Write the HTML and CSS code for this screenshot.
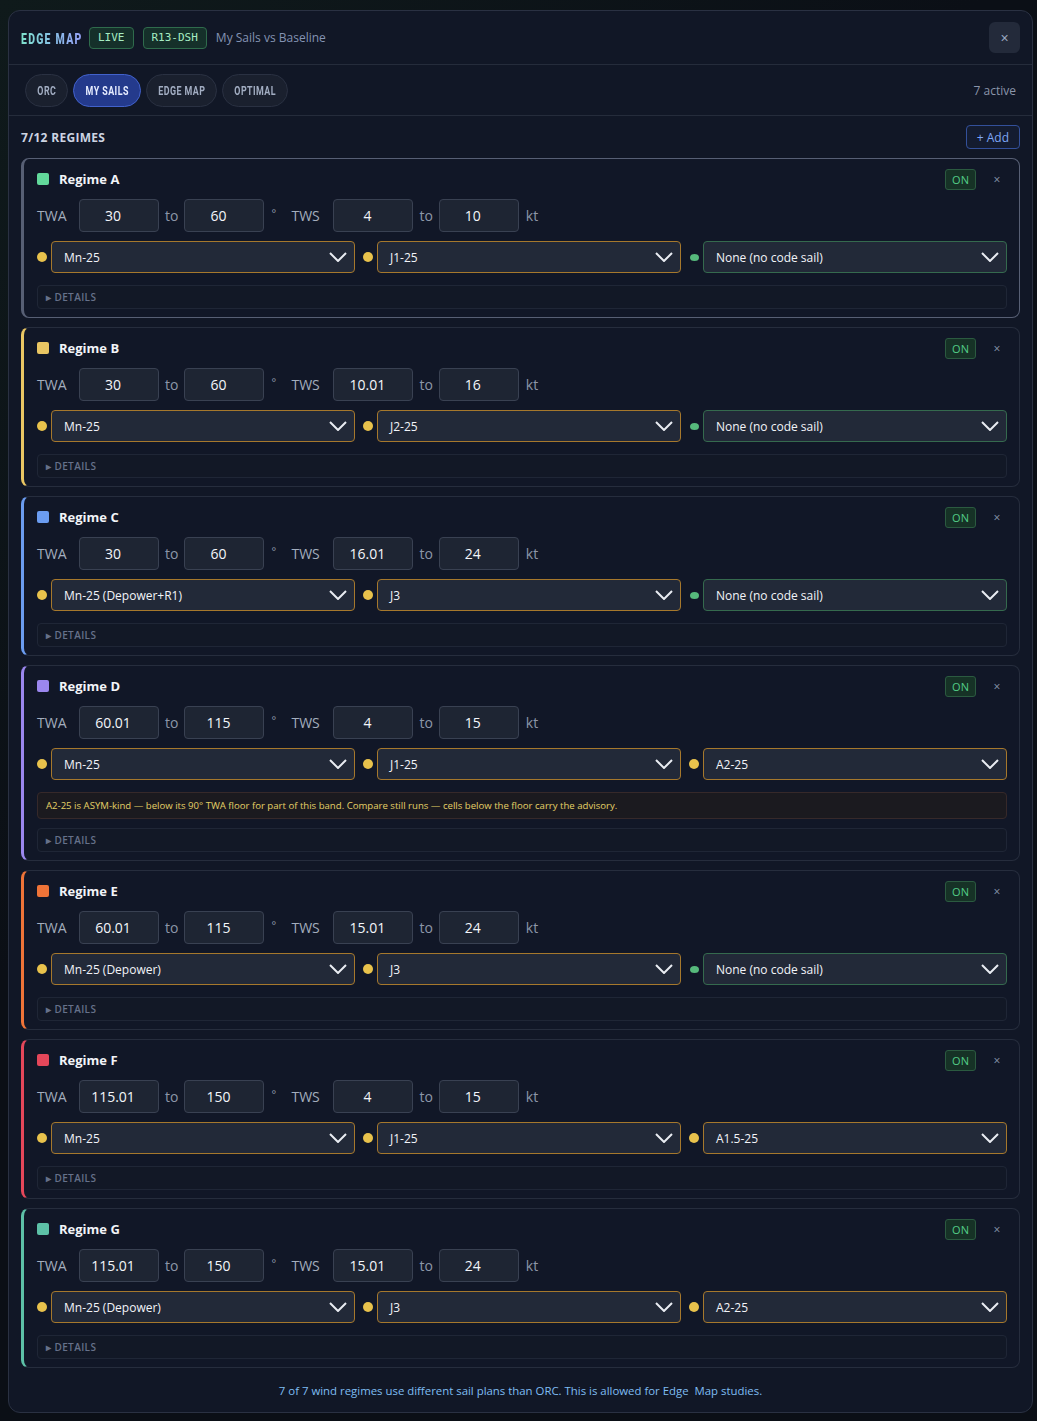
FILE: index.html
```html
<!DOCTYPE html>
<html lang="en">
<head>
    <meta charset="UTF-8">
    <title>Edge Map - My Sails vs Baseline</title>
    <link rel="stylesheet" href="styles.css">
</head>
<body>

<div class="panel">
    <div class="header">
        <span class="logo"><span>EDGE MAP</span></span>
        <span class="badge">LIVE</span>
        <span class="badge">R13-DSH</span>
        <span class="subtitle">My Sails vs Baseline</span>
        <button class="close">&times;</button>
    </div>

    <div class="tabs">
        <button class="tab t-orc"><span>ORC</span></button>
        <button class="tab t-mine active"><span>MY SAILS</span></button>
        <button class="tab t-edge"><span>EDGE MAP</span></button>
        <button class="tab t-opt"><span>OPTIMAL</span></button>
        <span class="active-count">7 active</span>
    </div>

    <div class="regimes">
        <div class="regimes-head">
            <span class="regimes-title">7/12 REGIMES</span>
            <button class="add">+ Add</button>
        </div>

        <!-- Regime A -->
        <div class="card selected c-a">
            <div class="card-head">
                <span class="swatch"></span>
                <span class="name">Regime A</span>
                <span class="on">ON</span>
                <span class="x">&times;</span>
            </div>
            <div class="range">
                <span class="lbl">TWA</span>
                <span class="num">30</span><span class="to">to</span><span class="num">60</span>
                <span class="unit deg">°</span>
                <span class="lbl">TWS</span>
                <span class="num">4</span><span class="to">to</span><span class="num">10</span>
                <span class="unit">kt</span>
            </div>
            <div class="sails">
                <div class="sail"><span class="dot amber"></span><div class="select amber">Mn-25<svg viewBox="0 0 18 10"><polyline points="1,1 9,9 17,1"/></svg></div></div>
                <div class="sail"><span class="dot amber"></span><div class="select amber">J1-25<svg viewBox="0 0 18 10"><polyline points="1,1 9,9 17,1"/></svg></div></div>
                <div class="sail"><span class="dot green"></span><div class="select green">None (no code sail)<svg viewBox="0 0 18 10"><polyline points="1,1 9,9 17,1"/></svg></div></div>
            </div>
            <div class="details">&#9656; DETAILS</div>
        </div>

        <!-- Regime B -->
        <div class="card c-b">
            <div class="card-head">
                <span class="swatch"></span>
                <span class="name">Regime B</span>
                <span class="on">ON</span>
                <span class="x">&times;</span>
            </div>
            <div class="range">
                <span class="lbl">TWA</span>
                <span class="num">30</span><span class="to">to</span><span class="num">60</span>
                <span class="unit deg">°</span>
                <span class="lbl">TWS</span>
                <span class="num">10.01</span><span class="to">to</span><span class="num">16</span>
                <span class="unit">kt</span>
            </div>
            <div class="sails">
                <div class="sail"><span class="dot amber"></span><div class="select amber">Mn-25<svg viewBox="0 0 18 10"><polyline points="1,1 9,9 17,1"/></svg></div></div>
                <div class="sail"><span class="dot amber"></span><div class="select amber">J2-25<svg viewBox="0 0 18 10"><polyline points="1,1 9,9 17,1"/></svg></div></div>
                <div class="sail"><span class="dot green"></span><div class="select green">None (no code sail)<svg viewBox="0 0 18 10"><polyline points="1,1 9,9 17,1"/></svg></div></div>
            </div>
            <div class="details">&#9656; DETAILS</div>
        </div>

        <!-- Regime C -->
        <div class="card c-c">
            <div class="card-head">
                <span class="swatch"></span>
                <span class="name">Regime C</span>
                <span class="on">ON</span>
                <span class="x">&times;</span>
            </div>
            <div class="range">
                <span class="lbl">TWA</span>
                <span class="num">30</span><span class="to">to</span><span class="num">60</span>
                <span class="unit deg">°</span>
                <span class="lbl">TWS</span>
                <span class="num">16.01</span><span class="to">to</span><span class="num">24</span>
                <span class="unit">kt</span>
            </div>
            <div class="sails">
                <div class="sail"><span class="dot amber"></span><div class="select amber">Mn-25 (Depower+R1)<svg viewBox="0 0 18 10"><polyline points="1,1 9,9 17,1"/></svg></div></div>
                <div class="sail"><span class="dot amber"></span><div class="select amber">J3<svg viewBox="0 0 18 10"><polyline points="1,1 9,9 17,1"/></svg></div></div>
                <div class="sail"><span class="dot green"></span><div class="select green">None (no code sail)<svg viewBox="0 0 18 10"><polyline points="1,1 9,9 17,1"/></svg></div></div>
            </div>
            <div class="details">&#9656; DETAILS</div>
        </div>

        <!-- Regime D -->
        <div class="card c-d">
            <div class="card-head">
                <span class="swatch"></span>
                <span class="name">Regime D</span>
                <span class="on">ON</span>
                <span class="x">&times;</span>
            </div>
            <div class="range">
                <span class="lbl">TWA</span>
                <span class="num">60.01</span><span class="to">to</span><span class="num">115</span>
                <span class="unit deg">°</span>
                <span class="lbl">TWS</span>
                <span class="num">4</span><span class="to">to</span><span class="num">15</span>
                <span class="unit">kt</span>
            </div>
            <div class="sails">
                <div class="sail"><span class="dot amber"></span><div class="select amber">Mn-25<svg viewBox="0 0 18 10"><polyline points="1,1 9,9 17,1"/></svg></div></div>
                <div class="sail"><span class="dot amber"></span><div class="select amber">J1-25<svg viewBox="0 0 18 10"><polyline points="1,1 9,9 17,1"/></svg></div></div>
                <div class="sail"><span class="dot amber"></span><div class="select amber">A2-25<svg viewBox="0 0 18 10"><polyline points="1,1 9,9 17,1"/></svg></div></div>
            </div>
            <div class="advisory">A2-25 is ASYM-kind — below its 90° TWA floor for part of this band. Compare still runs — cells below the floor carry the advisory.</div>
            <div class="details">&#9656; DETAILS</div>
        </div>

        <!-- Regime E -->
        <div class="card c-e">
            <div class="card-head">
                <span class="swatch"></span>
                <span class="name">Regime E</span>
                <span class="on">ON</span>
                <span class="x">&times;</span>
            </div>
            <div class="range">
                <span class="lbl">TWA</span>
                <span class="num">60.01</span><span class="to">to</span><span class="num">115</span>
                <span class="unit deg">°</span>
                <span class="lbl">TWS</span>
                <span class="num">15.01</span><span class="to">to</span><span class="num">24</span>
                <span class="unit">kt</span>
            </div>
            <div class="sails">
                <div class="sail"><span class="dot amber"></span><div class="select amber">Mn-25 (Depower)<svg viewBox="0 0 18 10"><polyline points="1,1 9,9 17,1"/></svg></div></div>
                <div class="sail"><span class="dot amber"></span><div class="select amber">J3<svg viewBox="0 0 18 10"><polyline points="1,1 9,9 17,1"/></svg></div></div>
                <div class="sail"><span class="dot green"></span><div class="select green">None (no code sail)<svg viewBox="0 0 18 10"><polyline points="1,1 9,9 17,1"/></svg></div></div>
            </div>
            <div class="details">&#9656; DETAILS</div>
        </div>

        <!-- Regime F -->
        <div class="card c-f">
            <div class="card-head">
                <span class="swatch"></span>
                <span class="name">Regime F</span>
                <span class="on">ON</span>
                <span class="x">&times;</span>
            </div>
            <div class="range">
                <span class="lbl">TWA</span>
                <span class="num">115.01</span><span class="to">to</span><span class="num">150</span>
                <span class="unit deg">°</span>
                <span class="lbl">TWS</span>
                <span class="num">4</span><span class="to">to</span><span class="num">15</span>
                <span class="unit">kt</span>
            </div>
            <div class="sails">
                <div class="sail"><span class="dot amber"></span><div class="select amber">Mn-25<svg viewBox="0 0 18 10"><polyline points="1,1 9,9 17,1"/></svg></div></div>
                <div class="sail"><span class="dot amber"></span><div class="select amber">J1-25<svg viewBox="0 0 18 10"><polyline points="1,1 9,9 17,1"/></svg></div></div>
                <div class="sail"><span class="dot amber"></span><div class="select amber">A1.5-25<svg viewBox="0 0 18 10"><polyline points="1,1 9,9 17,1"/></svg></div></div>
            </div>
            <div class="details">&#9656; DETAILS</div>
        </div>

        <!-- Regime G -->
        <div class="card c-g">
            <div class="card-head">
                <span class="swatch"></span>
                <span class="name">Regime G</span>
                <span class="on">ON</span>
                <span class="x">&times;</span>
            </div>
            <div class="range">
                <span class="lbl">TWA</span>
                <span class="num">115.01</span><span class="to">to</span><span class="num">150</span>
                <span class="unit deg">°</span>
                <span class="lbl">TWS</span>
                <span class="num">15.01</span><span class="to">to</span><span class="num">24</span>
                <span class="unit">kt</span>
            </div>
            <div class="sails">
                <div class="sail"><span class="dot amber"></span><div class="select amber">Mn-25 (Depower)<svg viewBox="0 0 18 10"><polyline points="1,1 9,9 17,1"/></svg></div></div>
                <div class="sail"><span class="dot amber"></span><div class="select amber">J3<svg viewBox="0 0 18 10"><polyline points="1,1 9,9 17,1"/></svg></div></div>
                <div class="sail"><span class="dot amber"></span><div class="select amber">A2-25<svg viewBox="0 0 18 10"><polyline points="1,1 9,9 17,1"/></svg></div></div>
            </div>
            <div class="details">&#9656; DETAILS</div>
        </div>
    </div>

    <p class="footer">7 of 7 wind regimes use different sail plans than ORC. This is allowed for Edge&nbsp; Map studies.</p>
</div>

</body>
</html>
```

FILE: styles.css
```css
* {
    box-sizing: border-box;
}
body {
    margin: 0;
    padding: 10px 4px 8px 8px;
    background: linear-gradient(135deg, #0f1a1b 0%, #0b0f16 40%, #0b0f16 100%);
    font-family: "Open Sans", "Noto Sans", sans-serif;
    color: #e6e9f0;
}
.panel {
    background: #111726;
    border: 1px solid #2a3142;
    border-radius: 12px;
    overflow: hidden;
}
.header {
    display: flex;
    align-items: center;
    height: 54px;
    padding: 0 12px;
    border-bottom: 1px solid #252c3b;
}
/* no condensed family installed, so the narrow display text is squeezed */
.logo {
    width: 59px;
    margin-right: 9px;
    white-space: nowrap;
}
.logo span {
    display: inline-block;
    font-family: Roboto, sans-serif;
    font-weight: 900;
    font-size: 15px;
    letter-spacing: 1.8px;
    transform: scaleX(0.7);
    transform-origin: left center;
    background: linear-gradient(90deg, #7ee0cc 0%, #86c4e4 45%, #96a0f6 100%);
    -webkit-background-clip: text;
    background-clip: text;
    color: transparent;
}
.badge {
    font-family: "DejaVu Sans Mono", monospace;
    font-size: 11px;
    line-height: 20px;
    color: #a6ecc2;
    background: #15302a;
    border: 1px solid #2f6b4c;
    border-radius: 4px;
    padding: 0 8px;
    margin-right: 9px;
}
.subtitle {
    font-size: 12px;
    color: #8493b3;
}
.close {
    margin-left: auto;
    width: 31px;
    height: 31px;
    border: none;
    border-radius: 6px;
    background: #232a3a;
    color: #9aa6bf;
    font-size: 14px;
}
.tabs {
    display: flex;
    align-items: center;
    gap: 5px;
    height: 51px;
    padding: 0 16px;
    border-bottom: 1px solid #252c3b;
}
.tab {
    height: 33px;
    padding: 0;
    border-radius: 17px;
    border: 1px solid #2a3142;
    background: #1a202e;
    color: #a2adc2;
    white-space: nowrap;
    overflow: visible;
}
.tab span {
    display: inline-block;
    font-family: Roboto, sans-serif;
    font-weight: bold;
    font-size: 12px;
    letter-spacing: 0.6px;
    transform: scaleX(0.74);
}
.t-orc { width: 43px; }
.t-mine { width: 68px; }
.t-edge { width: 71px; }
.t-opt { width: 66px; }
.tab.active {
    background: #243a8c;
    border-color: #4262cc;
    color: #e6ecff;
}
.active-count {
    margin-left: auto;
    font-size: 12px;
    color: #8b95aa;
}
.regimes {
    padding: 9px 12px 0 12px;
}
.regimes-head {
    display: flex;
    align-items: center;
    justify-content: space-between;
    margin-bottom: 9px;
}
.regimes-title {
    font-size: 12px;
    font-weight: bold;
    color: #cdd4e2;
    letter-spacing: 0.3px;
}
.add {
    height: 24px;
    padding: 0 10px;
    border: 1px solid #33509a;
    border-radius: 4px;
    background: #141c30;
    color: #7ea6f5;
    font-family: inherit;
    font-size: 12px;
}
.card {
    border: 1px solid #262d3d;
    border-left: 3px solid;
    border-radius: 8px;
    padding: 9px 12px 8px 13px;
    margin-bottom: 9px;
    background: #111727;
}
.card:last-child {
    margin-bottom: 0;
}
.card.selected {
    border-color: #575f74;
}
.c-a { border-left-color: #62d99b; }
.c-b { border-left-color: #e9c663; }
.c-c { border-left-color: #6b9cf0; }
.c-d { border-left-color: #9b87ee; }
.c-e { border-left-color: #ef7438; }
.c-f { border-left-color: #e5475a; }
.c-g { border-left-color: #5dc1a7; }
.c-a .swatch { background: #62d99b; }
.c-b .swatch { background: #e9c663; }
.c-c .swatch { background: #6b9cf0; }
.c-d .swatch { background: #9b87ee; }
.c-e .swatch { background: #ef7438; }
.c-f .swatch { background: #e5475a; }
.c-g .swatch { background: #5dc1a7; }
.card-head {
    display: flex;
    align-items: center;
    height: 22px;
}
.swatch {
    width: 12px;
    height: 12px;
    border-radius: 2px;
    margin-right: 10px;
}
.name {
    font-size: 13px;
    font-weight: bold;
    color: #f2f4f8;
}
.on {
    margin-left: auto;
    width: 31px;
    height: 21px;
    line-height: 19px;
    text-align: center;
    font-size: 11px;
    color: #52cc86;
    background: #163226;
    border: 1px solid #2b5a40;
    border-radius: 3px;
}
.x {
    width: 20px;
    margin-left: 11px;
    text-align: center;
    font-size: 12px;
    color: #8a96ad;
}
.range {
    display: flex;
    align-items: center;
    gap: 6px;
    margin-top: 9px;
}
.lbl {
    width: 36px;
    font-size: 14px;
    color: #a3adbd;
}
.num {
    width: 80px;
    height: 33px;
    line-height: 31px;
    padding-right: 12px;
    text-align: center;
    background: #1e2533;
    border: 1px solid #394152;
    border-radius: 4px;
    font-size: 14px;
    color: #f4f6fa;
}
.to {
    font-size: 14px;
    color: #8c96a8;
}
.unit {
    font-size: 14px;
    color: #8c96a8;
    margin-left: 1px;
}
.unit.deg {
    width: 5px;
    font-size: 11px;
    margin: 0 9px 6px 1px;
}
.sails {
    display: flex;
    gap: 8px;
    margin-top: 9px;
}
.sail {
    flex: 1;
    display: flex;
    align-items: center;
    gap: 4px;
}
.dot {
    width: 10px;
    height: 10px;
    border-radius: 50%;
    flex: none;
}
.dot.amber {
    background: #e8c24c;
}
.dot.green {
    width: 9px;
    height: 7px;
    margin-left: 1px;
    background: #56b97c;
}
.select {
    flex: 1;
    display: flex;
    align-items: center;
    justify-content: space-between;
    height: 32px;
    padding: 0 7px 0 12px;
    background: #222938;
    border: 1px solid;
    border-radius: 4px;
    font-size: 12px;
    color: #f2f4f8;
}
.select.amber {
    border-color: #a6782c;
}
.select.green {
    border-color: #356a4e;
}
.select svg {
    width: 18px;
    height: 10px;
    fill: none;
    stroke: #e9ecf2;
    stroke-width: 2;
}
.advisory {
    margin-top: 12px;
    height: 27px;
    line-height: 25px;
    padding: 0 8px;
    background: #1b1a1f;
    border: 1px solid #36292a;
    border-radius: 4px;
    font-size: 9.6px;
    color: #e4d066;
}
.details {
    margin-top: 12px;
    height: 24px;
    line-height: 22px;
    padding-left: 8px;
    background: #121826;
    border: 1px solid #1f2636;
    border-radius: 4px;
    font-size: 10px;
    font-weight: 600;
    color: #66718a;
    letter-spacing: 0.4px;
}
.advisory + .details {
    margin-top: 9px;
}
.footer {
    margin: 15px 0 14px 0;
    text-align: center;
    font-size: 11.4px;
    color: #7fbdf2;
}
```
